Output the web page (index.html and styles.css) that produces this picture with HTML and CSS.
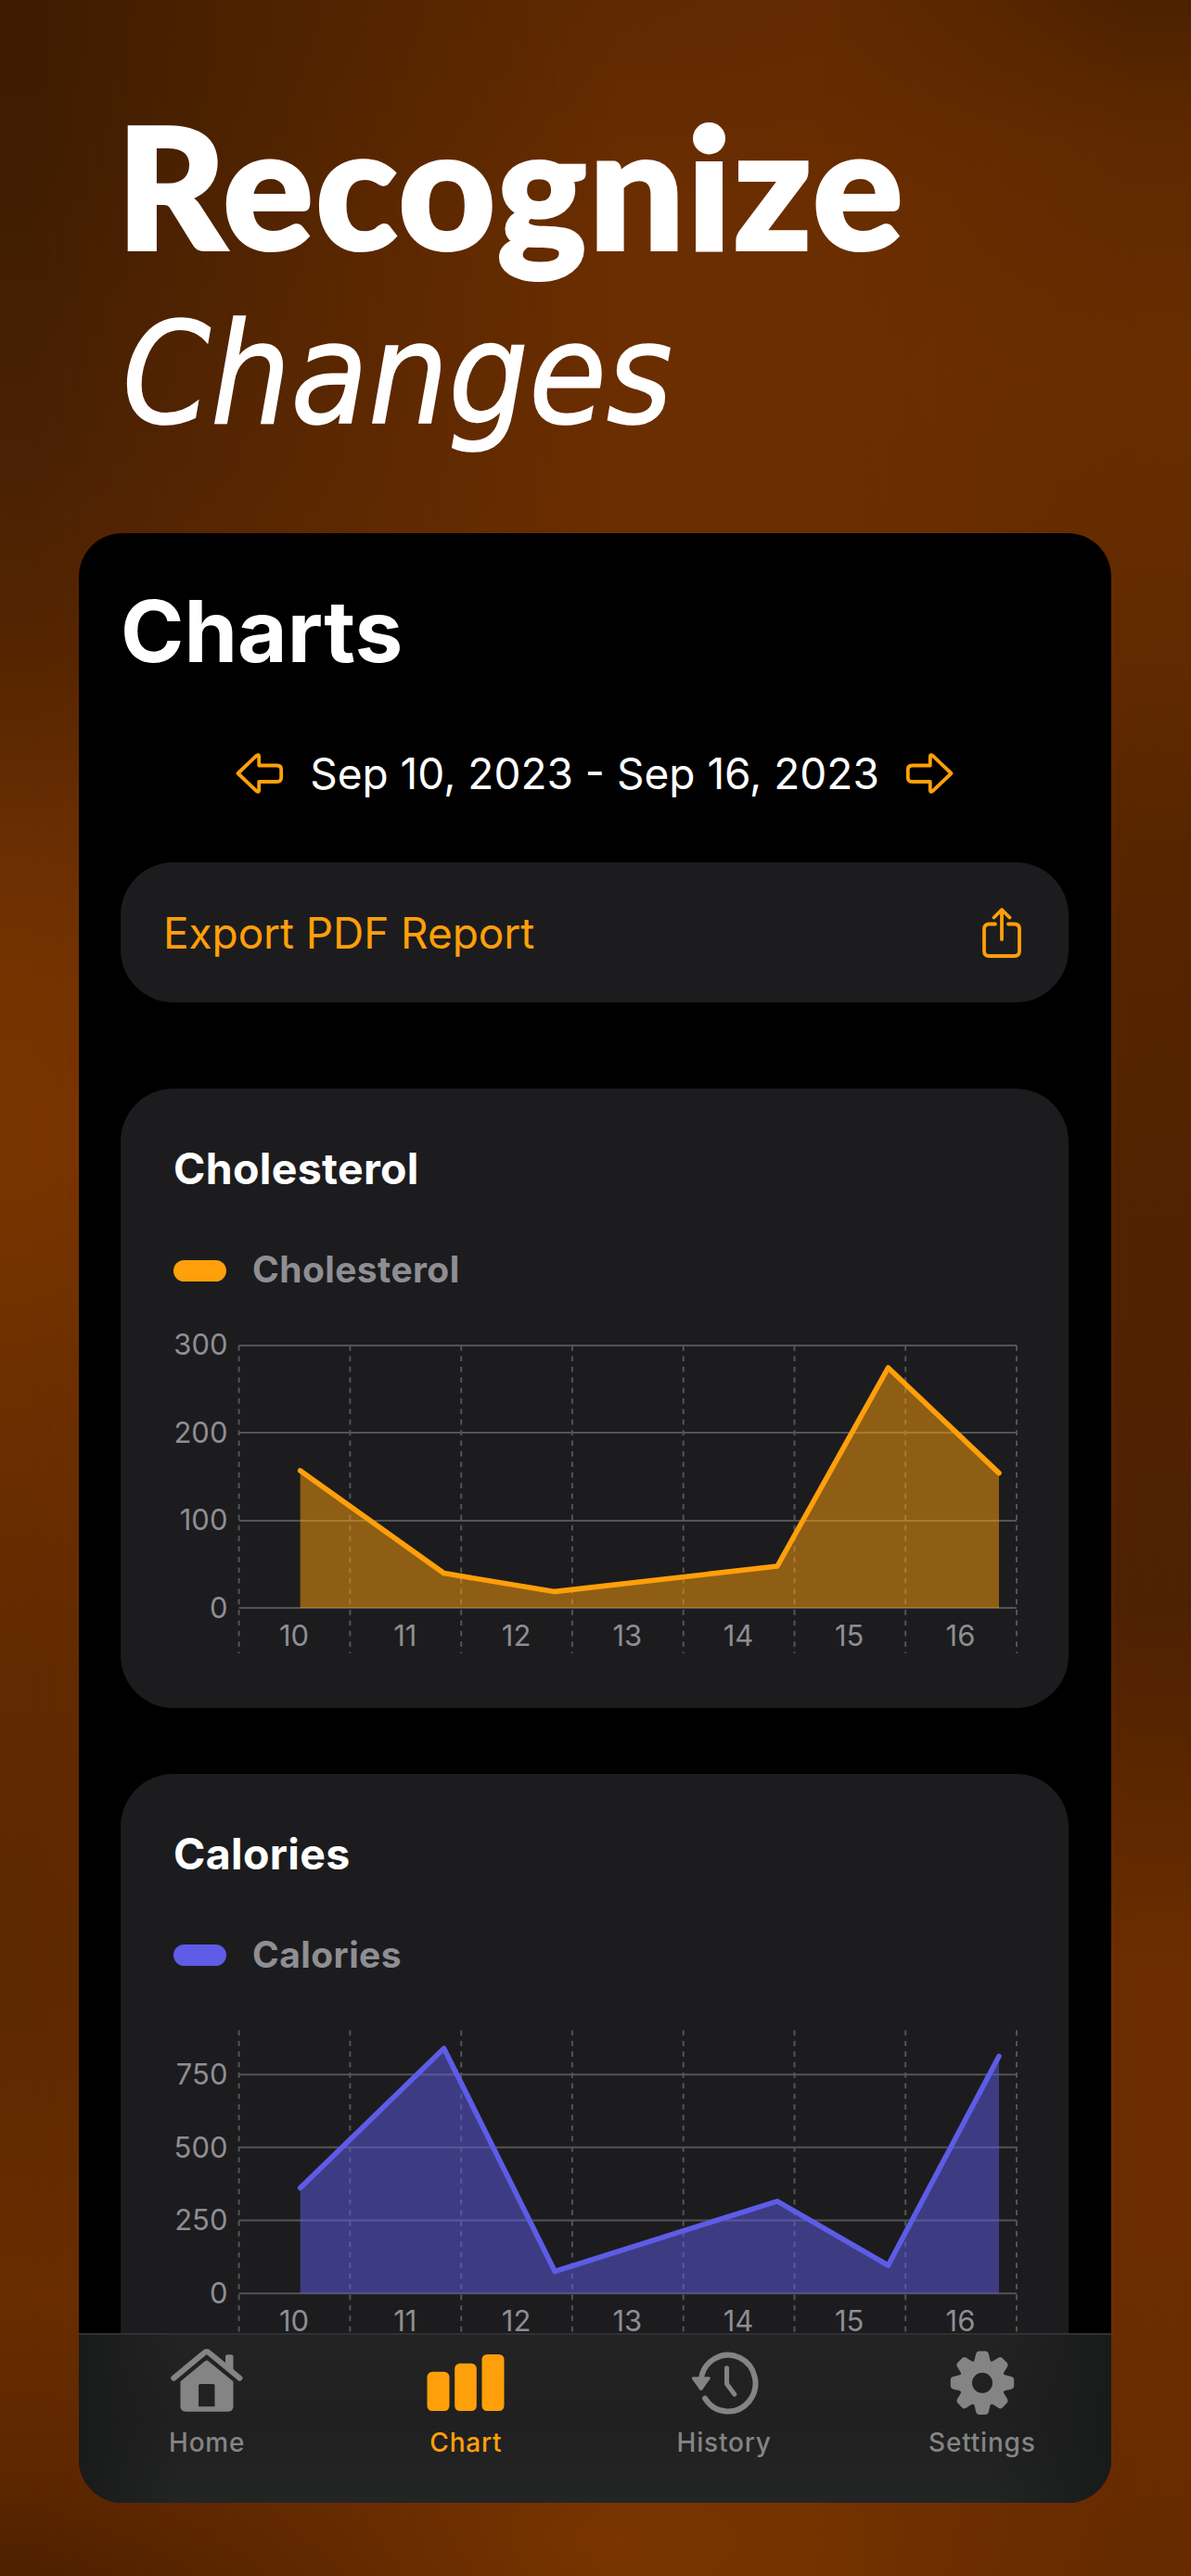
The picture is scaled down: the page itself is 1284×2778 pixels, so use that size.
FILE: index.html
```html
<!DOCTYPE html>
<html lang="en">
<head>
<meta charset="utf-8">
<title>Recognize Changes</title>
<link rel="stylesheet" href="styles.css">
</head>
<body>
<header class="hero">
  <h1 class="hero-title">Recognize</h1>
  <p class="hero-sub">Changes</p>
</header>
<main class="phone">
  <section class="content">
    <h2 class="page-title">Charts</h2>
    <div class="range">
      <svg class="arrow" width="52" height="44" viewBox="0 0 52 44"><path d="M2.5 22 22.8 2.7Q25.200 1 25.200 4V13.500H44.500Q49.200 13.500 49.200 18V26.500Q49.200 31 44.500 31H25.200V40Q25.200 43 22.800 41.300Z"/></svg>
      <span class="range-text">Sep 10, 2023 - Sep 16, 2023</span>
      <svg class="arrow arrow-next" width="52" height="44" viewBox="0 0 52 44"><path d="M2.5 22 22.8 2.7Q25.200 1 25.200 4V13.500H44.500Q49.200 13.500 49.200 18V26.500Q49.200 31 44.500 31H25.200V40Q25.200 43 22.800 41.300Z"/></svg>
    </div>
    <div class="export">
      <span class="export-text">Export PDF Report</span>
      <svg class="share" width="44" height="56" viewBox="0 0 44 56"><path d="M15 18.500H8.500Q3 18.500 3 24V47.500Q3 53 8.500 53H35.500Q41 53 41 47.500V24Q41 18.500 35.500 18.500H29M22 35V4M13.500 11.500 22 3 30.500 11.500"/></svg>
    </div>
    <article class="card">
      <h3 class="card-title">Cholesterol</h3>
      <div class="legend"><span class="pill orange"></span><span class="legend-text">Cholesterol</span></div>
      <svg class="chart" width="1022" height="380" viewBox="130 1430 1022 380">
        <path class="grid" d="M257.600 1451H1096M257.600 1545H1096M257.600 1640H1096M257.600 1734H1096"/>
        <path class="grid dash" d="M257.600 1451V1783M377.400 1451V1783M497.200 1451V1783M616.900 1451V1783M736.700 1451V1783M856.500 1451V1783M976.200 1451V1783M1096 1451V1783"/>
        <path class="area orange-fill" d="M323.700 1586 478.600 1696.600 598.200 1716.400 838 1689 957.500 1475 1077 1588.600V1734H323.700Z"/>
        <path class="line orange-line" d="M323.700 1586 478.600 1696.600 598.200 1716.400 838 1689 957.500 1475 1077 1588.600"/>
        <g class="ylab"><text x="245.500" y="1461">300</text><text x="245.500" y="1555.500">200</text><text x="245.500" y="1650">100</text><text x="245.500" y="1744.500">0</text></g>
        <g class="xlab"><text x="317" y="1775">10</text><text x="436.800" y="1775">11</text><text x="556.600" y="1775">12</text><text x="676.400" y="1775">13</text><text x="796" y="1775">14</text><text x="915.700" y="1775">15</text><text x="1035.500" y="1775">16</text></g>
      </svg>
    </article>
    <article class="card">
      <h3 class="card-title">Calories</h3>
      <div class="legend"><span class="pill indigo"></span><span class="legend-text">Calories</span></div>
      <svg class="chart" width="1022" height="380" viewBox="130 2168.500 1022 380">
        <path class="grid" d="M257.600 2236.700H1096M257.600 2315.300H1096M257.600 2394H1096M257.600 2472.700H1096"/>
        <path class="grid dash" d="M257.600 2189V2521.500M377.400 2189V2521.500M497.200 2189V2521.500M616.900 2189V2521.500M736.700 2189V2521.500M856.500 2189V2521.500M976.200 2189V2521.500M1096 2189V2521.500"/>
        <path class="area indigo-fill" d="M323.700 2359 478.600 2208.500 598.200 2449 838 2373.300 957.500 2442.500 1077 2217V2472.700H323.700Z"/>
        <path class="line indigo-line" d="M323.700 2359 478.600 2208.500 598.200 2449 838 2373.300 957.500 2442.500 1077 2217"/>
        <g class="ylab"><text x="245.500" y="2247.200">750</text><text x="245.500" y="2326">500</text><text x="245.500" y="2404.700">250</text><text x="245.500" y="2483.300">0</text></g>
        <g class="xlab"><text x="317" y="2513.800">10</text><text x="436.800" y="2513.800">11</text><text x="556.600" y="2513.800">12</text><text x="676.400" y="2513.800">13</text><text x="796" y="2513.800">14</text><text x="915.700" y="2513.800">15</text><text x="1035.500" y="2513.800">16</text></g>
      </svg>
    </article>
  </section>
  <nav class="tabs">
    <div class="tab">
      <svg class="tab-icon" width="84" height="76" viewBox="180.500 2530 84 76">
        <path class="roof" d="M186.800 2564.600 219.800 2537.200Q222.300 2535 224.800 2537.200L257.900 2564.600"/>
        <path d="M242.500 2549V2541.300Q242.500 2539.300 244.500 2539.300H249Q251 2539.300 251 2541.300V2558Z"/>
        <path fill-rule="evenodd" d="M194 2568.300 220.500 2546.200Q222.300 2544.600 224.100 2546.200L251 2568.300V2595Q251 2600.700 245.300 2600.700H199.700Q194 2600.700 194 2595ZM215 2571Q213.600 2571 213.600 2572.500V2595.300H231V2572.500Q231 2571 229.600 2571Z"/>
      </svg>
      <span class="tab-label">Home</span>
    </div>
    <div class="tab active">
      <svg class="tab-icon" width="84" height="76" viewBox="460.500 2530 84 76">
        <rect x="461" y="2557.800" width="24" height="42.200" rx="5.500"/><rect x="490.700" y="2548.800" width="23.600" height="51.200" rx="5.500"/><rect x="520" y="2539" width="24" height="61" rx="5.500"/>
      </svg>
      <span class="tab-label">Chart</span>
    </div>
    <div class="tab">
      <svg class="tab-icon" width="84" height="76" viewBox="738.700 2530 84 76">
        <path class="ring" d="M755.400 2566A29.500 30.400 0 1 1 759.800 2586.500"/>
        <path d="M747 2563.300H764Q766.300 2563.500 765 2565.700L757 2577Q755.400 2579 753.900 2577L746 2565.700Q744.500 2563.500 747 2563.300Z"/>
        <path class="hands" d="M783.200 2553.800V2570.700L791.500 2582"/>
      </svg>
      <span class="tab-label">History</span>
    </div>
    <div class="tab">
      <svg class="tab-icon" width="84" height="76" viewBox="-42 -39.700 84 76">
        <defs><path id="tooth" d="M-10.500-20C-8-24-8-27-6.800-31.500Q-6.200-34.200-3.600-34.200H3.600Q6.200-34.200 6.800-31.500C8-27 8-24 10.500-20Z"/></defs>
        <circle r="18" class="hub"/>
        <use href="#tooth"/><use href="#tooth" transform="rotate(45)"/><use href="#tooth" transform="rotate(90)"/><use href="#tooth" transform="rotate(135)"/><use href="#tooth" transform="rotate(180)"/><use href="#tooth" transform="rotate(225)"/><use href="#tooth" transform="rotate(270)"/><use href="#tooth" transform="rotate(315)"/>
      </svg>
      <span class="tab-label">Settings</span>
    </div>
  </nav>
</main>
</body>
</html>
```
FILE: styles.css
```css
* { box-sizing: border-box; }
h1, h2, h3, p { margin: 0; }
body {
  margin: 0;
  width: 1284px;
  height: 2778px;
  overflow: hidden;
  display: flex;
  flex-direction: column;
  font-family: Inter, "Liberation Sans", sans-serif;
  color: #fff;
  background:
    radial-gradient(ellipse 700px 260px at 640px 2740px, #7a3500 0%, #7a350000 100%),
    radial-gradient(ellipse 800px 240px at 640px 0, #602902 0%, #60290200 100%),
    #6b2e00;
}
/* soft glow bands down both sides of the backdrop */
body::before, body::after {
  content: "";
  position: absolute;
  z-index: -1;
  top: 0;
  height: 2778px;
}
body::before {
  left: 0;
  width: 700px;
  background: linear-gradient(#3e1c00, #3f1d00 150px, #4a2104 500px, #562500 720px, #692e03 900px, #753300 1060px, #793500 1240px, #6c2f00 1500px, #622a00 1800px, #5d2800 2120px, #682d00 2480px, #5e2700 2660px, #4e2000 2778px);
  mask-image: linear-gradient(90deg, #000 30px, #0000 660px);
}
body::after {
  left: 884px;
  width: 400px;
  background: linear-gradient(#4c2100, #5f2900 150px, #682e00 400px, #622a00 708px, #562500 920px, #522300 1240px, #4e2104 1736px, #582500 1880px, #6c2e00 2126px, #6c2e00 2392px, #662b00 2778px);
  mask-image: linear-gradient(270deg, #000 60px, #0000 400px);
}
.hero { height: 575px; padding-left: 126px; white-space: nowrap; }
.hero-title {
  padding-top: 89px;
  font: 900 181px/220px Lato, sans-serif;
  letter-spacing: 3px;
  -webkit-text-stroke: 4px #fff;
}
.hero-sub {
  font: italic 400 151px/200px "DejaVu Sans Condensed", "DejaVu Sans", sans-serif;
  font-stretch: 90%;
  padding-left: 6px;
  margin-top: -5px;
  letter-spacing: .3px;
  -webkit-text-stroke: 1.600px #fff;
}
.phone {
  width: 1113px;
  height: 2124px;
  margin-left: 85px;
  border-radius: 47px;
  background: #000;
  overflow: hidden;
  display: flex;
  flex-direction: column;
}
.content { height: 1941px; padding: 0 45px; overflow: hidden; }
.page-title { height: 190px; padding-top: 49px; font-size: 92.500px; line-height: 112px; font-weight: 700; }
.range { height: 138px; display: flex; justify-content: center; align-items: center; gap: 28px; width: 1022px; }
.range-text { font-size: 46px; line-height: 56px; white-space: nowrap; }
.arrow { fill: none; stroke: #ff9f0a; stroke-width: 3.8; stroke-linejoin: round; }
.arrow-next { transform: scaleX(-1); }
.export {
  margin-top: 27px;
  width: 1022px;
  height: 151px;
  border-radius: 57px;
  background: #1c1c1e;
  padding: 0 50px 0 46px;
  display: flex;
  align-items: center;
  justify-content: space-between;
  color: #ff9f0a;
  font-size: 46px;
  letter-spacing: -.1px;
}
.share { fill: none; stroke: #ff9f0a; stroke-width: 3.8; stroke-linecap: round; stroke-linejoin: round; }
.card {
  margin-top: 93px;
  width: 1022px;
  height: 668px;
  border-radius: 57px;
  background: #1c1c1e;
}
.card + .card { margin-top: 70.500px; }
.card-title { padding: 56px 0 0 57px; font-size: 46.500px; line-height: 60px; font-weight: 700; letter-spacing: .3px; }
.legend { height: 60px; margin-top: 50px; padding-left: 57px; display: flex; align-items: center; gap: 28px; margin-bottom: 30px; }
.pill { width: 57px; height: 23px; border-radius: 12px; }
.orange { background: #ff9f0a; }
.indigo { background: #5e5ce6; }
.legend-text { color: #8e8e93; font-size: 39px; line-height: 46px; margin-top: -2px; font-weight: 650; letter-spacing: .4px; }
.chart { display: block; }
.grid { fill: none; stroke: #545456; stroke-width: 2; }
.dash { stroke-dasharray: 5.700; }
.area { opacity: .5; }
.orange-fill { fill: #ff9f0a; }
.indigo-fill { fill: #5e5ce6; }
.line { fill: none; stroke-width: 5.600; stroke-linecap: round; stroke-linejoin: round; }
.orange-line { stroke: #ff9f0a; }
.indigo-line { stroke: #5e5ce6; }
.ylab, .xlab { fill: #8e8e93; font-size: 31px; }
.ylab { text-anchor: end; }
.xlab { text-anchor: middle; }
.tabs {
  height: 183px;
  border-top: 2px solid #303131;
  background: linear-gradient(90deg, #191b1a, #191b1a00 10% 88%, #191b1a), linear-gradient(#232323, #1f201f 50%, #232424);
  display: flex;
}
.tab { width: 278.250px; display: flex; flex-direction: column; align-items: center; padding-top: 12px; color: #848484; }
.tab:first-child { padding-right: 2px; }
.tab.active { color: #ff9f0a; }
.tab-icon { fill: currentColor; }
.roof, .ring, .hands { fill: none; stroke: currentColor; stroke-width: 6; stroke-linecap: round; }
.hands { stroke-width: 5; stroke-linejoin: round; }
.hub { fill: none; stroke: currentColor; stroke-width: 14; }
.tab-label { margin-top: 11px; font-size: 28px; line-height: 34px; font-weight: 500; letter-spacing: .8px; }
```
